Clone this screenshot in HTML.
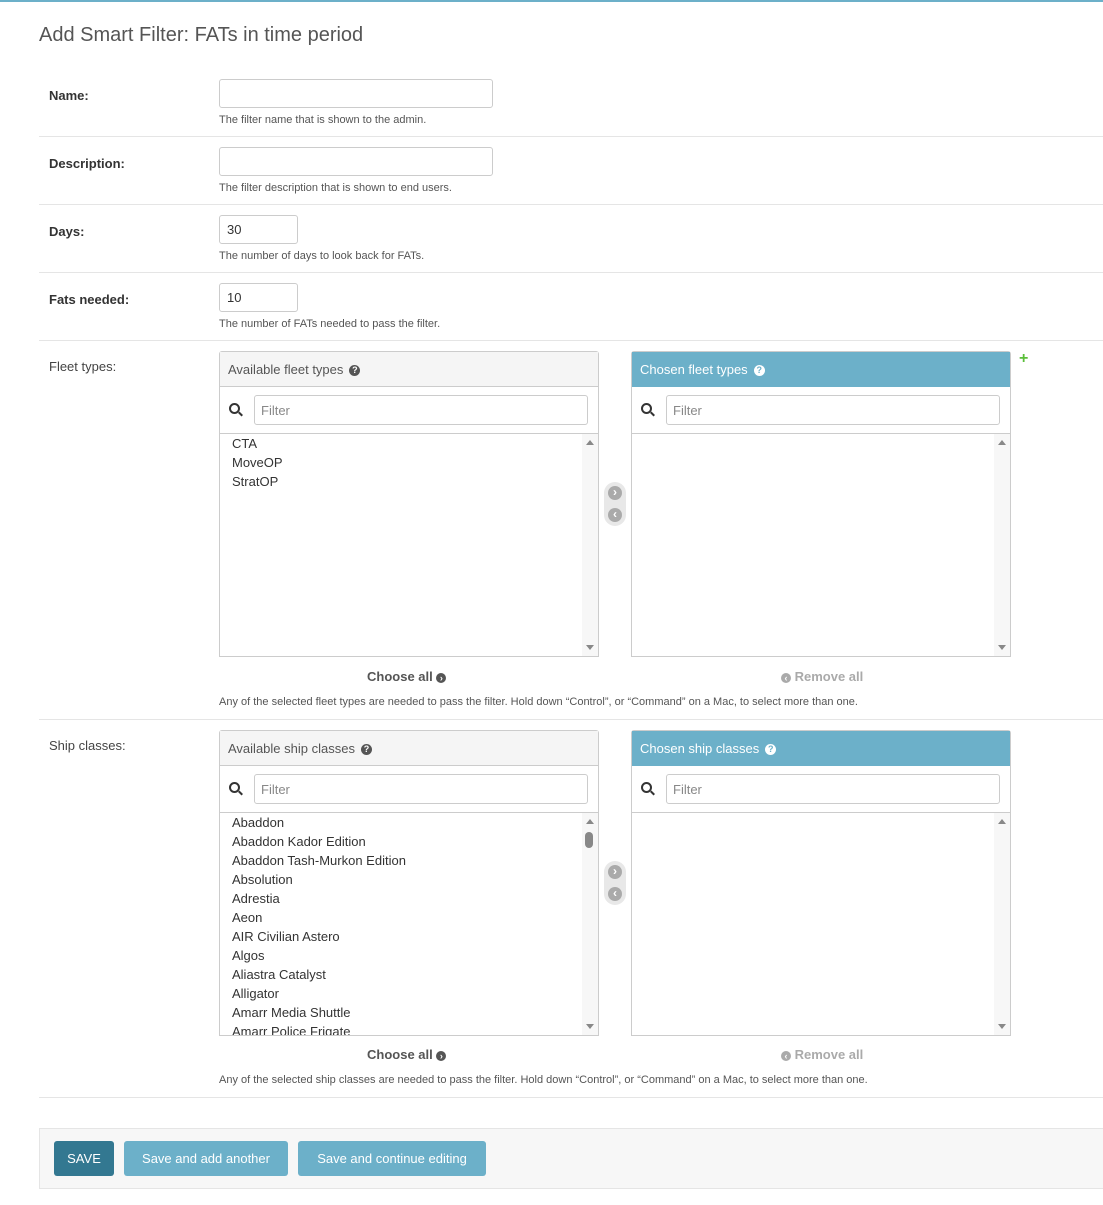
<!DOCTYPE html>
<html><head><meta charset="utf-8"><style>
*{box-sizing:border-box;margin:0;padding:0}
body{width:1103px;height:1205px;position:relative;background:#fff;font-family:"Liberation Sans",sans-serif;color:#333;overflow:hidden}
.a{position:absolute;white-space:nowrap}
h1{position:absolute;left:39px;top:24px;font-size:20px;font-weight:normal;color:#555}
.lb{position:absolute;left:49px;font-size:13px;font-weight:bold;color:#333}
.ln{position:absolute;left:49px;font-size:13px;color:#444}
.inp{position:absolute;left:219px;height:29px;border:1px solid #ccc;border-radius:3px;font-size:13px;padding:6px 7px;color:#333}
.help{position:absolute;left:219px;font-size:11px;color:#555;white-space:nowrap;margin-top:2px}
.sep{position:absolute;left:39px;right:0;height:1px;background:#e5e5e5}
.box{position:absolute;width:380px;height:306px;border:1px solid #ccc;border-radius:3px 3px 0 0}
.hd{height:35px;background:#f5f5f5;border-bottom:1px solid #ccc;font-size:13px;color:#555;padding:10px 8px}
.box.ch .hd{background:#6cb0c9;color:#fff;border-color:#6cb0c9}
.q{display:inline-block;width:11px;height:11px;border-radius:50%;background:#555;color:#fff;font-size:9px;font-weight:bold;text-align:center;line-height:11px;margin-left:6px;vertical-align:1px}
.ch .q{background:#fff;color:#6cb0c9}
.fr{height:47px;border-bottom:1px solid #ccc;position:relative}
.fr .f{position:absolute;left:34px;top:8px;right:10px;height:30px;border:1px solid #ccc;border-radius:3px;font-size:13px;color:#888;padding:7px 6px}
.mag{position:absolute;left:9px;top:16px;width:11px;height:11px;border:2px solid #333;border-radius:50%}
.mag:after{content:"";position:absolute;left:7px;top:8px;width:5px;height:2px;background:#333;transform:rotate(45deg)}
.ls{position:relative;height:222px;font-size:13px;color:#333;padding:0 12px;line-height:19px;overflow:hidden}
.sb{position:absolute;right:0;top:0;width:16px;height:100%;background:#f7f7f7}
.up{position:absolute;right:4px;top:6px;border:4px solid transparent;border-bottom:5px solid #888;border-top:0}
.dn{position:absolute;right:4px;bottom:6px;border:4px solid transparent;border-top:5px solid #888;border-bottom:0}
.arr{position:absolute;left:604px;width:22px;height:44px;background:#e8e8e8;border-radius:11px}
.arr i{position:absolute;left:4px;width:14px;height:14px;border-radius:50%;background:#aaa;color:#fff;font-style:normal;font-size:12px;text-align:center;line-height:13px;font-weight:bold}
.cb{position:absolute;font-size:13px;font-weight:bold;color:#555}
.rm{color:#aaa}
.ci{display:inline-block;width:10px;height:10px;border-radius:50%;background:#555;color:#fff;font-size:9px;text-align:center;line-height:10px;vertical-align:0}
.rm .ci{background:#aaa}
.sub{position:absolute;left:39px;right:0;top:1128px;height:61px;background:#f7f7f7;border:1px solid #e5e5e5;border-right:0}
.btn{position:absolute;top:12px;height:35px;border-radius:3px;color:#fff;font-size:13px;line-height:35px;text-align:center;background:#6cb0c9}
</style></head><body>
<div class="a" style="left:0;top:0;width:1103px;height:2px;background:#6cb0c9"></div>
<h1>Add Smart Filter: FATs in time period</h1>

<div class="lb" style="top:88px">Name:</div>
<div class="inp" style="top:79px;width:274px"></div>
<div class="help" style="top:112px">The filter name that is shown to the admin.</div>
<div class="sep" style="top:136px"></div>

<div class="lb" style="top:156px">Description:</div>
<div class="inp" style="top:147px;width:274px"></div>
<div class="help" style="top:180px">The filter description that is shown to end users.</div>
<div class="sep" style="top:204px"></div>

<div class="lb" style="top:224px">Days:</div>
<div class="inp" style="top:215px;width:79px">30</div>
<div class="help" style="top:248px">The number of days to look back for FATs.</div>
<div class="sep" style="top:272px"></div>

<div class="lb" style="top:292px">Fats needed:</div>
<div class="inp" style="top:283px;width:79px">10</div>
<div class="help" style="top:316px">The number of FATs needed to pass the filter.</div>
<div class="sep" style="top:340px"></div>

<div class="ln" style="top:359px">Fleet types:</div>
<div class="box" style="left:219px;top:351px"><div class="hd">Available fleet types<span class="q">?</span></div><div class="fr"><span class="mag"></span><div class="f">Filter</div></div><div class="ls"><div class="sb"><span class="up"></span><span class="dn"></span></div>CTA<br>MoveOP<br>StratOP</div></div>
<div class="arr" style="top:482px"><i style="top:4px">›</i><i style="top:26px">‹</i></div>
<div class="box ch" style="left:631px;top:351px"><div class="hd">Chosen fleet types<span class="q">?</span></div><div class="fr"><span class="mag"></span><div class="f">Filter</div></div><div class="ls"><div class="sb"><span class="up"></span><span class="dn"></span></div></div></div>
<div class="a" style="left:1019px;top:350px;color:#5bbf3a;font-weight:bold;font-size:16px">+</div>
<div class="cb" style="left:367px;top:669px">Choose all <span class="ci">›</span></div>
<div class="cb rm" style="left:781px;top:669px"><span class="ci">‹</span> Remove all</div>
<div class="help" style="top:694px">Any of the selected fleet types are needed to pass the filter. Hold down “Control”, or “Command” on a Mac, to select more than one.</div>
<div class="sep" style="top:719px"></div>

<div class="ln" style="top:738px">Ship classes:</div>
<div class="box" style="left:219px;top:730px"><div class="hd">Available ship classes<span class="q">?</span></div><div class="fr"><span class="mag"></span><div class="f">Filter</div></div><div class="ls"><div class="sb"><span class="up"></span><span style="position:absolute;left:3px;top:19px;width:8px;height:16px;border-radius:4px;background:#888"></span><span class="dn"></span></div>Abaddon<br>Abaddon Kador Edition<br>Abaddon Tash-Murkon Edition<br>Absolution<br>Adrestia<br>Aeon<br>AIR Civilian Astero<br>Algos<br>Aliastra Catalyst<br>Alligator<br>Amarr Media Shuttle<br>Amarr Police Frigate</div></div>
<div class="arr" style="top:861px"><i style="top:4px">›</i><i style="top:26px">‹</i></div>
<div class="box ch" style="left:631px;top:730px"><div class="hd">Chosen ship classes<span class="q">?</span></div><div class="fr"><span class="mag"></span><div class="f">Filter</div></div><div class="ls"><div class="sb"><span class="up"></span><span class="dn"></span></div></div></div>
<div class="cb" style="left:367px;top:1047px">Choose all <span class="ci">›</span></div>
<div class="cb rm" style="left:781px;top:1047px"><span class="ci">‹</span> Remove all</div>
<div class="help" style="top:1072px">Any of the selected ship classes are needed to pass the filter. Hold down “Control”, or “Command” on a Mac, to select more than one.</div>
<div class="sep" style="top:1097px"></div>

<div class="sub">
<div class="btn" style="left:14px;width:60px;background:#337891">SAVE</div>
<div class="btn" style="left:84px;width:164px">Save and add another</div>
<div class="btn" style="left:258px;width:188px">Save and continue editing</div>
</div>
</body></html>
